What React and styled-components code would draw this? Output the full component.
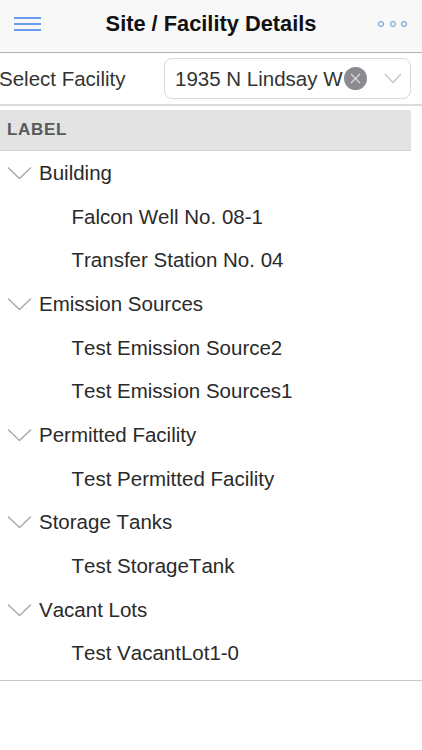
import React from 'react';
import styled, { createGlobalStyle } from 'styled-components';

const Global = createGlobalStyle`
  html, body { margin: 0; padding: 0; background: #fff; }
  body { font-family: "Liberation Sans", Arial, sans-serif; color: #222; font-kerning: none; }
`;
const Page = styled.div`width: 422px; height: 750px; overflow: hidden; background: #fff;`;
const TopBar = styled.header`
  height: 48px; padding-bottom: 4px; box-sizing: content-box; background: #f8f8f8; border-bottom: 1.5px solid #b4b4b4;
  display: grid; grid-template-columns: 64px 1fr 64px; align-items: center;
`;
const Menu = styled.button`
  border: 0; background: none; padding: 0 0 0 14px; display: flex; flex-direction: column; gap: 3.5px; width: 41px; box-sizing: content-box;
  & > span { display: block; height: 2.5px; width: 27px; background: #6a9bee; }
`;
const Title = styled.h1`margin: 0; font-size: 21.8px; font-weight: 700; text-align: center; color: #111; white-space: nowrap;`;
const Dots = styled.div`display: flex; gap: 5.5px; justify-content: flex-end; padding-right: 15px;`;
const Dot = styled.span`width: 6px; height: 6px; border: 1.8px solid #5f8fe6; border-radius: 50%; box-sizing: border-box;`;
const FacilityRow = styled.div`
  height: 51px; display: flex; align-items: center; justify-content: space-between;
  padding: 0 11px 0 0; border-bottom: 2px solid #dcdcdc;
`;
const FieldLabel = styled.label`font-size: 20.5px; color: #333; margin-left: -1px;`;
const Select = styled.div`
  width: 247px; height: 41px; box-sizing: border-box; border: 1px solid #d8d8d8; border-radius: 8px;
  display: flex; align-items: center; padding-left: 10px; position: relative;
`;
const SelectValue = styled.span`font-size: 20.5px; color: #333; white-space: nowrap; flex: none;`;
const Clear = styled.span`
  position: absolute; left: 179px; top: 8px; width: 23px; height: 23px; border-radius: 50%; background: #8a8a90;
  display: flex; align-items: center; justify-content: center;
`;
const Chevron = styled.svg`display: block; flex: none;`;
const SelectChevron = styled(Chevron)`position: absolute; right: 8px; top: 14px;`;
const TableHead = styled.div`
  width: 411px; height: 41px; box-sizing: border-box; margin-top: 4px; background: #e3e3e3; border-bottom: 1px solid #d3d3d3;
  display: flex; align-items: center; padding-left: 7px; font-size: 17px; font-weight: 700; letter-spacing: 0.7px; color: #5a5a5a;
`;
const Tree = styled.div`border-bottom: 1.5px solid #c8c8c8; padding: 0 0 5px;`;
const Row = styled.div`
  height: 43.7px; display: flex; align-items: center; font-size: 20.5px; color: #2a2a2a; white-space: nowrap;
  padding-left: ${p => (p.$child ? 71.5 : 7)}px; gap: 7px;
`;
const Arrow = () => (
  <Chevron width="25" height="14" viewBox="0 0 25 14" fill="none" stroke="#a8a8a8" strokeWidth="1.4"><path d="M1 1.5 L12.5 12.5 L24 1.5" /></Chevron>
);
const data = [
  ['Building', ['Falcon Well No. 08-1', 'Transfer Station No. 04']],
  ['Emission Sources', ['Test Emission Source2', 'Test Emission Sources1']],
  ['Permitted Facility', ['Test Permitted Facility']],
  ['Storage Tanks', ['Test StorageTank']],
  ['Vacant Lots', ['Test VacantLot1-0']],
];
export default function App() {
  return (
    <Page>
      <Global />
      <TopBar>
        <Menu aria-label="Menu"><span /><span /><span /></Menu>
        <Title>Site / Facility Details</Title>
        <Dots><Dot /><Dot /><Dot /></Dots>
      </TopBar>
      <FacilityRow>
        <FieldLabel>Select Facility</FieldLabel>
        <Select>
          <SelectValue>1935 N Lindsay W</SelectValue>
          <Clear>
            <svg width="13" height="13" viewBox="0 0 13 13" stroke="#d8d8dc" strokeWidth="1.3"><path d="M2 2 L11 11 M11 2 L2 11" /></svg>
          </Clear>
          <SelectChevron width="18" height="11" viewBox="0 0 18 11" fill="none" stroke="#c4c4c4" strokeWidth="1.4"><path d="M1 1 L9 9.5 L17 1" /></SelectChevron>
        </Select>
      </FacilityRow>
      <TableHead>LABEL</TableHead>
      <Tree>
        {data.map(([g, items]) => (
          <React.Fragment key={g}>
            <Row><Arrow />{g}</Row>
            {items.map(i => <Row $child key={i}>{i}</Row>)}
          </React.Fragment>
        ))}
      </Tree>
    </Page>
  );
}
